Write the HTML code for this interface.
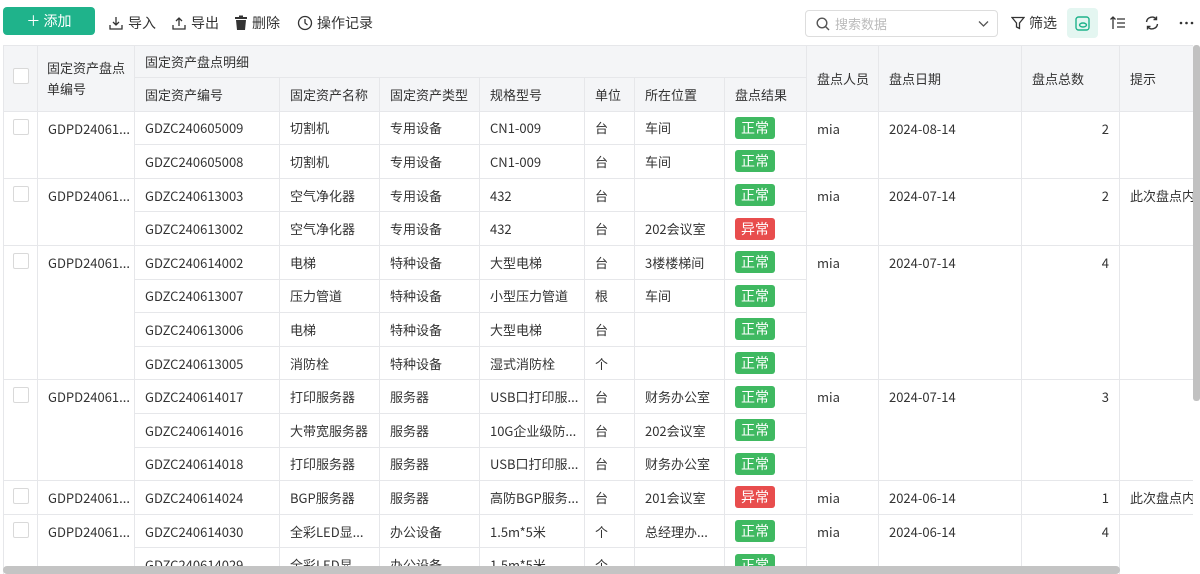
<!DOCTYPE html>
<html><head><meta charset="utf-8"><style>
*{box-sizing:border-box;margin:0;padding:0}
body{width:1200px;height:574px;overflow:hidden;background:#fff;font-family:"Noto Sans CJK SC","Liberation Sans",sans-serif;font-size:13px;color:#333;position:relative}
.tb{position:absolute;top:0;left:0;width:1200px;height:45px}
.add{position:absolute;left:3px;top:7px;width:92px;height:28px;background:#1fb38b;border-radius:4px;color:#fff;font-size:14px;line-height:28px;text-align:center}
.tbi{position:absolute;top:13px;font-size:14px;color:#333;line-height:20px;display:flex;align-items:center;gap:4px}
.search{position:absolute;left:805px;top:10px;width:193px;height:27px;border:1px solid #ddd;border-radius:4px;color:#bbb;font-size:13px;line-height:25px;padding-left:29px}
.hl{position:absolute;left:1067px;top:8px;width:31px;height:30px;background:#e4f6f1;border-radius:4px}
.wrap{position:absolute;left:3px;top:45px;width:1190px;height:529px;overflow:hidden}
table{border-collapse:collapse;table-layout:fixed;width:1196px}
td,th{border:1px solid #e6e7ea;height:33.6px;padding:0 10px;text-align:left;font-weight:normal;white-space:nowrap;overflow:hidden;vertical-align:middle}
th{background:#f4f5f7;color:#333}
td.top{vertical-align:top;padding-top:7px}
.b{display:inline-block;width:40px;height:22px;line-height:22px;text-align:center;color:#fff;border-radius:3px;font-size:14px;background:#3fb961}
.r{background:#e84d4d}
.cb{display:inline-block;width:16px;height:16px;border:1px solid #d9d9d9;border-radius:2px;background:#fff}
.num{text-align:right}
.vs{position:absolute;left:1193px;top:45px;width:7px;height:356px;background:#c1c1c1;border-radius:3px}
.hs{position:absolute;left:3px;top:566px;width:1117px;height:8px;background:#c4c4c4;border-radius:4px}
</style></head><body>
<div class="tb">
<div class="add">＋ 添加</div>
<div class="tbi" style="left:108px"><svg width="16" height="16" viewBox="0 0 16 16" fill="none" stroke="#333" stroke-width="1.3"><path d="M8 2v8M5 7l3 3 3-3M2 10v4h12v-4"/></svg>导入</div>
<div class="tbi" style="left:171px"><svg width="16" height="16" viewBox="0 0 16 16" fill="none" stroke="#333" stroke-width="1.3"><path d="M8 11V3M5 6l3-3 3 3M2 10v4h12v-4"/></svg>导出</div>
<div class="tbi" style="left:234px"><svg width="14" height="16" viewBox="0 0 14 16" fill="#333"><rect x="1" y="2" width="12" height="2"/><rect x="5" y="0.5" width="4" height="2"/><path d="M2 5h10l-1 10H3z"/></svg>删除</div>
<div class="tbi" style="left:297px"><svg width="16" height="16" viewBox="0 0 16 16" fill="none" stroke="#333" stroke-width="1.3"><circle cx="8" cy="8" r="6.5"/><path d="M8 4v4l2.5 2"/></svg>操作记录</div>
<div class="search"><svg style="position:absolute;left:10px;top:6px" width="14" height="14" viewBox="0 0 14 14" fill="none" stroke="#555" stroke-width="1.4"><circle cx="6" cy="6" r="4.8"/><path d="M9.5 9.5l3.5 3.5"/></svg>搜索数据<svg style="position:absolute;left:172px;top:9px" width="11" height="8" viewBox="0 0 11 8" fill="none" stroke="#555" stroke-width="1.3"><path d="M1 1.5l4.5 4.5 4.5-4.5"/></svg></div>
<div class="tbi" style="left:1011px"><svg width="14" height="14" viewBox="0 0 14 14" fill="none" stroke="#333" stroke-width="1.3"><path d="M1 1.5h12L8.5 7v5.5L5.5 11V7z"/></svg>筛选</div>
<div class="hl"><svg style="position:absolute;left:8px;top:8px" width="15" height="15" viewBox="0 0 15 15" fill="none" stroke="#1fb38b" stroke-width="1.4"><rect x="1" y="1" width="13" height="13" rx="2.5"/><ellipse cx="8" cy="9" rx="3.5" ry="2"/></svg></div>
<svg style="position:absolute;left:1110px;top:16px" width="16" height="14" viewBox="0 0 16 14" fill="none" stroke="#333" stroke-width="1.3"><path d="M3 13V1M0.5 3.5L3 1l2.5 2.5M7 3h8M7 7h8M7 11h8"/></svg>
<svg style="position:absolute;left:1144px;top:15px" width="16" height="16" viewBox="0 0 16 16" fill="none" stroke="#333" stroke-width="1.4"><path d="M2.5 7a5.5 5.5 0 0 1 10-2.5M13.5 9a5.5 5.5 0 0 1-10 2.5M12.5 1.5v3h-3M3.5 14.5v-3h3"/></svg>
<svg style="position:absolute;left:1179px;top:21px" width="15" height="4" viewBox="0 0 15 4" fill="#333"><circle cx="2" cy="2" r="1.3"/><circle cx="7.5" cy="2" r="1.3"/><circle cx="13" cy="2" r="1.3"/></svg>
</div>
<div class="wrap"><table>
<colgroup><col style="width:34px"><col style="width:97px"><col style="width:145px"><col style="width:100px"><col style="width:100px"><col style="width:105px"><col style="width:50px"><col style="width:90px"><col style="width:82px"><col style="width:72px"><col style="width:143px"><col style="width:98px"><col style="width:80px"></colgroup>
<tr><th rowspan="2" style="padding:0 9px"><span class="cb"></span></th><th rowspan="2" style="line-height:21px;padding:0 9px">固定资产盘点<br>单编号</th><th colspan="7" style="height:32px">固定资产盘点明细</th><th rowspan="2">盘点人员</th><th rowspan="2">盘点日期</th><th rowspan="2">盘点总数</th><th rowspan="2">提示</th></tr>
<tr><th>固定资产编号</th><th>固定资产名称</th><th>固定资产类型</th><th>规格型号</th><th>单位</th><th>所在位置</th><th>盘点结果</th></tr>

<tr><td rowspan="2" class="top" style="padding:7px 9px 0"><span class="cb"></span></td><td rowspan="2" class="top">GDPD24061...</td><td>GDZC240605009</td><td>切割机</td><td>专用设备</td><td>CN1-009</td><td>台</td><td>车间</td><td><span class="b">正常</span></td><td rowspan="2" class="top">mia</td><td rowspan="2" class="top">2024-08-14</td><td rowspan="2" class="top num">2</td><td rowspan="2" class="top"></td></tr>
<tr><td>GDZC240605008</td><td>切割机</td><td>专用设备</td><td>CN1-009</td><td>台</td><td>车间</td><td><span class="b">正常</span></td></tr>

<tr><td rowspan="2" class="top" style="padding:7px 9px 0"><span class="cb"></span></td><td rowspan="2" class="top">GDPD24061...</td><td>GDZC240613003</td><td>空气净化器</td><td>专用设备</td><td>432</td><td>台</td><td></td><td><span class="b">正常</span></td><td rowspan="2" class="top">mia</td><td rowspan="2" class="top">2024-07-14</td><td rowspan="2" class="top num">2</td><td rowspan="2" class="top">此次盘点内容</td></tr>
<tr><td>GDZC240613002</td><td>空气净化器</td><td>专用设备</td><td>432</td><td>台</td><td>202会议室</td><td><span class="b r">异常</span></td></tr>

<tr><td rowspan="4" class="top" style="padding:7px 9px 0"><span class="cb"></span></td><td rowspan="4" class="top">GDPD24061...</td><td>GDZC240614002</td><td>电梯</td><td>特种设备</td><td>大型电梯</td><td>台</td><td>3楼楼梯间</td><td><span class="b">正常</span></td><td rowspan="4" class="top">mia</td><td rowspan="4" class="top">2024-07-14</td><td rowspan="4" class="top num">4</td><td rowspan="4" class="top"></td></tr>
<tr><td>GDZC240613007</td><td>压力管道</td><td>特种设备</td><td>小型压力管道</td><td>根</td><td>车间</td><td><span class="b">正常</span></td></tr>
<tr><td>GDZC240613006</td><td>电梯</td><td>特种设备</td><td>大型电梯</td><td>台</td><td></td><td><span class="b">正常</span></td></tr>
<tr><td>GDZC240613005</td><td>消防栓</td><td>特种设备</td><td>湿式消防栓</td><td>个</td><td></td><td><span class="b">正常</span></td></tr>

<tr><td rowspan="3" class="top" style="padding:7px 9px 0"><span class="cb"></span></td><td rowspan="3" class="top">GDPD24061...</td><td>GDZC240614017</td><td>打印服务器</td><td>服务器</td><td>USB口打印服...</td><td>台</td><td>财务办公室</td><td><span class="b">正常</span></td><td rowspan="3" class="top">mia</td><td rowspan="3" class="top">2024-07-14</td><td rowspan="3" class="top num">3</td><td rowspan="3" class="top"></td></tr>
<tr><td>GDZC240614016</td><td>大带宽服务器</td><td>服务器</td><td>10G企业级防...</td><td>台</td><td>202会议室</td><td><span class="b">正常</span></td></tr>
<tr><td>GDZC240614018</td><td>打印服务器</td><td>服务器</td><td>USB口打印服...</td><td>台</td><td>财务办公室</td><td><span class="b">正常</span></td></tr>

<tr><td class="top" style="padding:7px 9px 0"><span class="cb"></span></td><td>GDPD24061...</td><td>GDZC240614024</td><td>BGP服务器</td><td>服务器</td><td>高防BGP服务...</td><td>台</td><td>201会议室</td><td><span class="b r">异常</span></td><td>mia</td><td>2024-06-14</td><td class="num">1</td><td>此次盘点内容</td></tr>

<tr><td rowspan="2" class="top" style="padding:7px 9px 0"><span class="cb"></span></td><td rowspan="2" class="top">GDPD24061...</td><td>GDZC240614030</td><td>全彩LED显...</td><td>办公设备</td><td>1.5m*5米</td><td>个</td><td>总经理办...</td><td><span class="b">正常</span></td><td rowspan="2" class="top">mia</td><td rowspan="2" class="top">2024-06-14</td><td rowspan="2" class="top num">4</td><td rowspan="2" class="top"></td></tr>
<tr><td>GDZC240614029</td><td>全彩LED显...</td><td>办公设备</td><td>1.5m*5米</td><td>个</td><td></td><td><span class="b">正常</span></td></tr>
</table></div>
<div class="vs"></div>
<div class="hs"></div>
</body></html>
